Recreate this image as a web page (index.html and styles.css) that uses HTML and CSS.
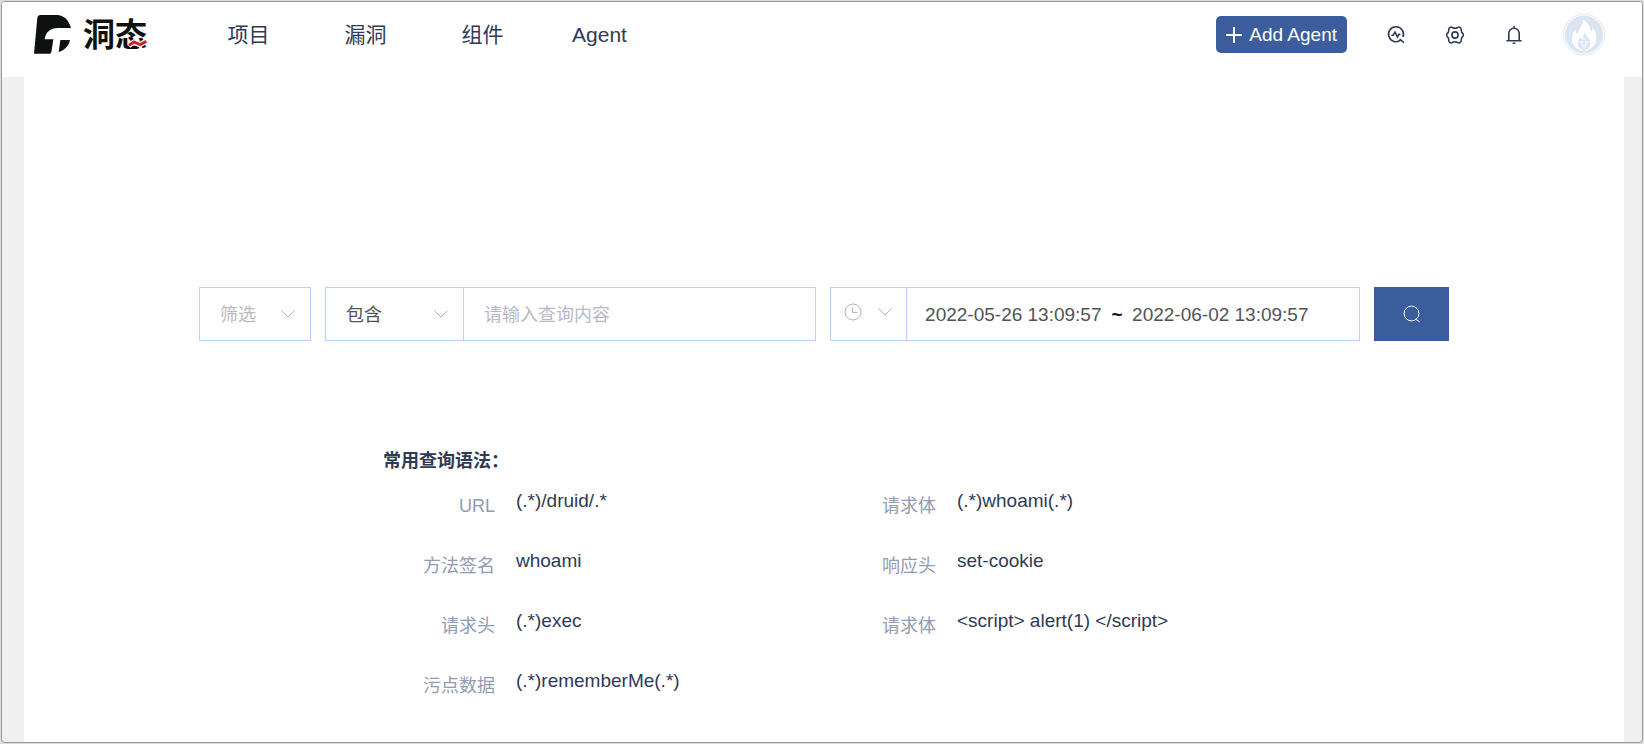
FILE: index.html
```html
<!DOCTYPE html>
<html lang="zh-CN">
<head>
<meta charset="utf-8">
<meta name="viewport" content="width=device-width, initial-scale=1">
<title>洞态</title>
<link rel="stylesheet" href="styles.css">
</head>
<body>
<div class="app">
  <header class="header">
    <a class="logo" href="#">
      <svg class="logo-mark" viewBox="102 45 111 117" aria-hidden="true">
        <path fill="#0e1110" d="M120 45H170C192 46 207 60 213 84H174C150 84 136 98 134 118H160L154 157Q153 161 149 161H102L112 53Q113 45 120 45ZM181 120H210C206 138 194 150 176 156Z"/>
      </svg>
      <span class="logo-text">洞态
        <svg class="logo-wave" viewBox="0 0 57 27" aria-hidden="true"><g fill="none"><path d="M2 20L18 9L36 17L56 6" stroke="#fff" stroke-width="16"/><path d="M3 19L18 9L36 17L55 7" stroke="#d0222b" stroke-width="9"/></g></svg>
      </span>
    </a>
    <nav class="nav">
      <a href="#">项目</a>
      <a href="#">漏洞</a>
      <a href="#">组件</a>
      <a href="#">Agent</a>
    </nav>
    <div class="tools">
      <button class="add" type="button">
        <svg class="plus" viewBox="0 0 16 16" aria-hidden="true"><path d="M8 0V16M0 8H16"/></svg>
        Add Agent
      </button>
      <button class="icon-btn" type="button" aria-label="搜索">
        <svg viewBox="0 0 20 20" aria-hidden="true"><path d="M14.6 15.2A7.5 7.5 0 1 1 17 12M13.6 14.2L18 17.6M5.4 10.2H7.2L9 7.2L11.4 12L12.8 9.4H14.4"/></svg>
      </button>
      <button class="icon-btn" type="button" aria-label="设置">
        <svg viewBox="0 0 20 20" aria-hidden="true"><path d="M5.4 2.2Q6.5 1.7 7.4 2.5Q10 4 12.6 2.5Q13.5 1.7 14.6 2.2L15.8 3.2Q16.4 4 16.2 5.2Q16.2 7.4 18 8.6Q18.8 10 18 11.4Q16.2 12.6 16.2 14.8Q16.4 16 15.8 16.8L14.6 17.8Q13.5 18.3 12.6 17.5Q10 16 7.4 17.5Q6.5 18.3 5.4 17.8L4.2 16.8Q3.6 16 3.8 14.8Q3.8 12.6 2 11.4Q1.2 10 2 8.6Q3.8 7.4 3.8 5.2Q3.6 4 4.2 3.2Z"/><circle cx="10" cy="10" r="3.1"/></svg>
      </button>
      <button class="icon-btn" type="button" aria-label="通知">
        <svg viewBox="0 0 20 20" aria-hidden="true"><path d="M4.8 15.6V8.6A5.2 5.4 0 0 1 15.2 8.6V15.6M2.4 15.8H17.6M8.6 18.2H11.4M10 1V3"/></svg>
      </button>
      <button class="avatar" type="button" aria-label="用户">
        <svg viewBox="0 0 126 128" aria-hidden="true">
          <circle cx="63" cy="64" r="61.5" fill="#fff" stroke="#cfdaec" stroke-width="2"/>
          <circle cx="63" cy="64" r="57" fill="#dae4f3"/>
          <path fill="#fff" d="M60 19C76 29 82 42 83 56C88 52 89 47 88 42C98 53 102 67 99 82C96 98 82 112 64 115C44 112 29 99 27 82C25 67 32 57 37 50C38 57 40 61 44 63C47 44 62 38 60 19Z"/>
          <path fill="#dae4f3" d="M64 55C66 68 80 73 82 88C83 101 75 109 63 111C51 108 43 100 45 88C46 80 50 76 52 70C54 76 55 78 58 80C63 72 61 64 64 55Z"/>
          <g fill="none" stroke="#fff" stroke-width="3"><circle cx="56" cy="88" r="4"/><circle cx="71" cy="88" r="4"/><path d="M61 77Q65 83 69 77M54 98Q63 94 72 98M58 104H69"/></g>
        </svg>
      </button>
    </div>
  </header>

  <main class="page">
    <form class="search">
      <div class="box field">
        <label class="picker picker-filter">
          <select class="select placeholder" aria-label="筛选"><option>筛选</option></select>
          <svg class="chevron" viewBox="0 0 14 8" aria-hidden="true"><path d="M0.5 0.5L7 7L13.5 0.5"/></svg>
        </label>
      </div>
      <div class="box query">
        <label class="picker picker-mode">
          <select class="select" aria-label="匹配方式"><option>包含</option></select>
          <svg class="chevron" viewBox="0 0 14 8" aria-hidden="true"><path d="M0.5 0.5L7 7L13.5 0.5"/></svg>
        </label>
        <input class="query-input" type="text" placeholder="请输入查询内容" aria-label="查询内容">
      </div>
      <div class="box range">
        <button class="range-btn" type="button" aria-label="时间范围">
          <svg class="clock" viewBox="0 0 18 18" aria-hidden="true"><circle cx="9" cy="9" r="8"/><path d="M8.5 4.5V9.5H13.5"/></svg>
          <svg class="chevron" viewBox="0 0 14 8" aria-hidden="true"><path d="M0.5 0.5L7 7L13.5 0.5"/></svg>
        </button>
        <div class="dates">
          <input class="date" type="text" value="2022-05-26 13:09:57" aria-label="开始时间">
          <span class="tilde">~</span>
          <input class="date" type="text" value="2022-06-02 13:09:57" aria-label="结束时间">
        </div>
      </div>
      <button class="submit" type="submit" aria-label="查询">
        <svg viewBox="0 0 18 18" aria-hidden="true"><circle cx="8.5" cy="8.5" r="7.4"/><path d="M12.6 14.2L16.6 16.8"/></svg>
      </button>
    </form>

    <section class="syntax">
      <h2 class="syntax-title">常用查询语法：</h2>
      <dl class="syntax-list">
        <div class="item"><dt>URL</dt><dd>(.*)/druid/.*</dd></div>
        <div class="item"><dt>请求体</dt><dd>(.*)whoami(.*)</dd></div>
        <div class="item"><dt>方法签名</dt><dd>whoami</dd></div>
        <div class="item"><dt>响应头</dt><dd>set-cookie</dd></div>
        <div class="item"><dt>请求头</dt><dd>(.*)exec</dd></div>
        <div class="item"><dt>请求体</dt><dd>&lt;script&gt; alert(1) &lt;/script&gt;</dd></div>
        <div class="item"><dt>污点数据</dt><dd>(.*)rememberMe(.*)</dd></div>
      </dl>
    </section>
  </main>
</div>
</body>
</html>
```
FILE: styles.css
```css
* { box-sizing: border-box; }

body {
  margin: 0;
  padding: 1px;
  background: #dcdcdc;
  color: #38435a;
  font-family: "Liberation Sans", "Noto Sans CJK SC", sans-serif;
  font-size: 18px;
}

button, input, select {
  margin: 0;
  padding: 0;
  border: 0;
  border-radius: 0;
  background: none;
  color: inherit;
  font: inherit;
  outline: none;
}

button { cursor: pointer; }
svg { display: block; }

.app {
  display: flex;
  flex-direction: column;
  min-height: calc(100vh - 2px);
  border: 1px solid #999;
  border-radius: 4px;
  background: #f0f0f0;
  overflow: hidden;
}

.header {
  display: flex;
  align-items: center;
  height: 75px;
  padding: 0 37px 10px 32px;
  background: #fff;
}

.logo {
  display: flex;
  align-items: center;
  gap: 12px;
  color: #0e1110;
  text-decoration: none;
}

.logo-mark { width: 37px; height: 39px; }

.logo-text {
  position: relative;
  font-size: 32px;
  line-height: 40px;
  font-weight: 700;
}

.logo-wave {
  position: absolute;
  right: 0;
  bottom: 7px;
  width: 19px;
  height: 9px;
}

.nav { display: flex; margin-left: 43px; }

.nav a {
  width: 117px;
  color: #2f3a55;
  font-size: 21px;
  line-height: 32px;
  text-align: center;
  text-decoration: none;
}

.tools {
  display: flex;
  align-items: center;
  gap: 39px;
  margin-left: auto;
}

.add {
  display: flex;
  align-items: center;
  gap: 7px;
  height: 37px;
  padding: 0 10px;
  border-radius: 5px;
  background: #3c5d9c;
  color: #fff;
  font-size: 19px;
}

.plus { width: 16px; height: 16px; }
.plus path { stroke: #fff; stroke-width: 2; }

.icon-btn { width: 20px; height: 20px; }

.icon-btn svg {
  width: 20px;
  height: 20px;
  fill: none;
  stroke: #2f3a55;
  stroke-width: 1.6;
}

.avatar, .avatar svg { width: 42px; height: 43px; }

.page {
  flex: 1;
  margin: 0 18px 0 22px;
  padding: 210px 20px 0;
  background: #fff;
}

.search {
  display: flex;
  gap: 14px;
  max-width: 1250px;
  height: 54px;
  margin: 0 auto;
  color: #515357;
}

.box { display: flex; border: 1px solid #b5d3fb; }
.field { flex: 0 0 112px; }
.query { flex: 491 1 0; }
.range { flex: 530 1 0; }

.picker { position: relative; display: flex; }
.picker-filter { flex: 1; }
.picker-mode { flex: 0 0 138px; border-right: 1px solid #b5d3fb; }

.select {
  width: 100%;
  padding: 2px 0 0 20px;
  appearance: none;
  cursor: pointer;
}

.placeholder { color: #b8bac2; }

.chevron {
  width: 14px;
  height: 8px;
  fill: none;
  stroke: #b0b5c2;
}

.picker .chevron {
  position: absolute;
  top: 22px;
  right: 15px;
  pointer-events: none;
}

.query-input {
  flex: 1;
  min-width: 0;
  padding: 2px 20px 0;
}

.query-input::placeholder { color: #b8bac2; opacity: 1; }

.range-btn {
  display: flex;
  flex: 0 0 76px;
  align-items: center;
  gap: 16px;
  padding: 0 14px 4px 13px;
  border-right: 1px solid #b5d3fb;
}

.clock {
  width: 18px;
  height: 18px;
  fill: none;
  stroke: #b0b5c2;
}

.dates {
  display: flex;
  align-items: center;
  padding: 2px 0 0 18px;
  font-size: 19px;
}

.date { width: 177px; }

.tilde {
  width: 30px;
  color: #111;
  font-weight: 700;
  text-align: center;
}

.submit {
  display: flex;
  flex: 0 0 75px;
  align-items: center;
  justify-content: center;
  background: #3c5d9c;
}

.submit svg {
  width: 18px;
  height: 18px;
  fill: none;
  stroke: #fff;
}

.syntax {
  max-width: 882px;
  margin: 106px auto 0;
}

.syntax-title {
  margin: 0;
  color: #2f3a55;
  font-size: 18px;
  line-height: 28px;
  font-weight: 700;
}

.syntax-list {
  display: grid;
  grid-template-columns: 1fr 1fr;
  margin: 12px 0 0;
}

.item {
  display: flex;
  gap: 21px;
  height: 60px;
}

.item dt {
  flex: 0 0 112px;
  padding-top: 5px;
  color: #919bb1;
  line-height: 28px;
  text-align: right;
}

.item dd {
  margin: 0;
  color: #2f3a55;
  font-size: 19px;
  line-height: 28px;
}
```
